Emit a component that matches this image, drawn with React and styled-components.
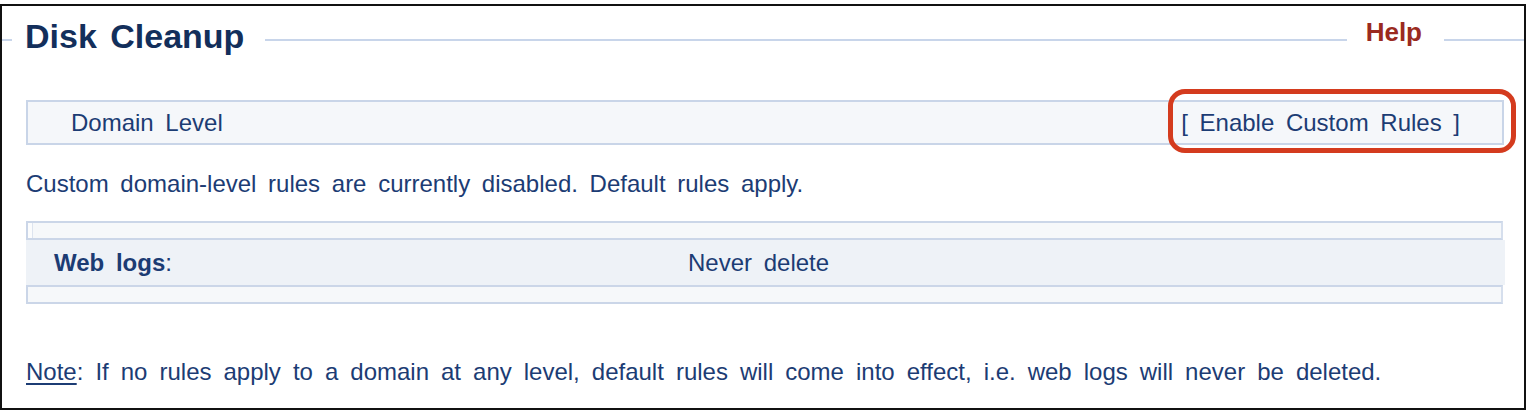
import React from "react";
import styled, { createGlobalStyle } from "styled-components";

const GlobalStyle = createGlobalStyle`
  html, body {
    margin: 0;
    padding: 0;
    background: #ffffff;
  }
  body {
    font-family: "Liberation Sans", Arial, sans-serif;
  }
`

const Frame = styled.div`
  box-sizing: border-box;
  width: 1526px;
  height: 406px;
  margin-top: 4px;
  border: 2px solid #111111;
  padding-bottom: 20px;
  color: #1c3c74;
  font-size: 24px;
  word-spacing: 5px;
`

const Header = styled.div`
  display: flex;
  align-items: flex-start;
`

const Rule = styled.div`
  height: 2px;
  margin-top: 33px;
  background: #c8d5ea;
  flex: ${p => (p.$grow ? "1 1 auto" : `0 0 ${p.$width}px`)};
`

const Title = styled.h1`
  margin: 10px 0 0;
  padding: 0 21px 0 13px;
  font-size: 34px;
  line-height: 40px;
  font-weight: bold;
  color: #132f5b;
  word-spacing: 4px;
`

const HelpLink = styled.a`
  margin-top: 11px;
  padding: 0 22px 0 19px;
  font-size: 26px;
  line-height: 30px;
  font-weight: bold;
  color: #9a2a20;
  text-decoration: none;
  word-spacing: 0;
`

const Body = styled.div`
  padding: 0 20px 0 24px;
`

const LevelBar = styled.div`
  position: relative;
  display: flex;
  justify-content: space-between;
  margin-top: 44px;
  padding: 0 42px 0 43px;
  height: 41px;
  line-height: 41px;
  background: #f5f7fa;
  border: 2px solid #c9d5e8;
`

const Highlight = styled.span`
  position: absolute;
  top: -13px;
  bottom: -10px;
  right: -14px;
  width: 338px;
  border: 5px solid #d43b1e;
  border-radius: 17px;
  pointer-events: none;
`

const Status = styled.p`
  margin: 24px 0 0;
  line-height: 30px;
`

const Table = styled.div`
  margin-top: 22px;
  margin-right: 1px;
`

const SpacerRow = styled.div`
  display: flex;
  height: 15px;
  border: 2px solid #cbd6e8;
  border-right-color: #d6dfed;
  background: #f6f8fa;
`

const SpacerCell = styled.div`
  width: 4px;
  border-right: 1px solid ${p => (p.$edge ? "#dde4ef" : "transparent")};
  background: ${p => (p.$edge ? "#fbfcfd" : "transparent")};
`

const DataRow = styled.div`
  display: grid;
  grid-template-columns: 634px 1fr;
  margin-right: -2px;
  padding-left: 28px;
  height: 45px;
  line-height: 45px;
  background: #eef2f7;
`

const Label = styled.span`
  font-weight: bold;
  span {
    font-weight: normal;
  }
`

const Note = styled.p`
  margin: 53px 0 0;
  line-height: 30px;
  word-spacing: 5.35px;
  u {
    text-decoration-thickness: 2px;
    text-underline-offset: 3px;
  }
`

export default function App() {
  return (
    <>
      <GlobalStyle />
      <Frame>
        <Header>
          <Rule $width={10} />
          <Title>Disk Cleanup</Title>
          <Rule $grow />
          <HelpLink href="#">Help</HelpLink>
          <Rule $width={80} />
        </Header>
        <Body>
          <LevelBar>
            <span>Domain Level</span>
            <span>[ Enable Custom Rules ]</span>
            <Highlight />
          </LevelBar>
          <Status>Custom domain-level rules are currently disabled. Default rules apply.</Status>
          <Table>
            <SpacerRow>
              <SpacerCell $edge />
            </SpacerRow>
            <DataRow>
              <Label>Web logs<span>:</span></Label>
              <span>Never delete</span>
            </DataRow>
            <SpacerRow>
              <SpacerCell />
            </SpacerRow>
          </Table>
          <Note>
            <u>Note</u>: If no rules apply to a domain at any level, default rules will come into effect, i.e. web logs will never be deleted.
          </Note>
        </Body>
      </Frame>
    </>
  );
}
